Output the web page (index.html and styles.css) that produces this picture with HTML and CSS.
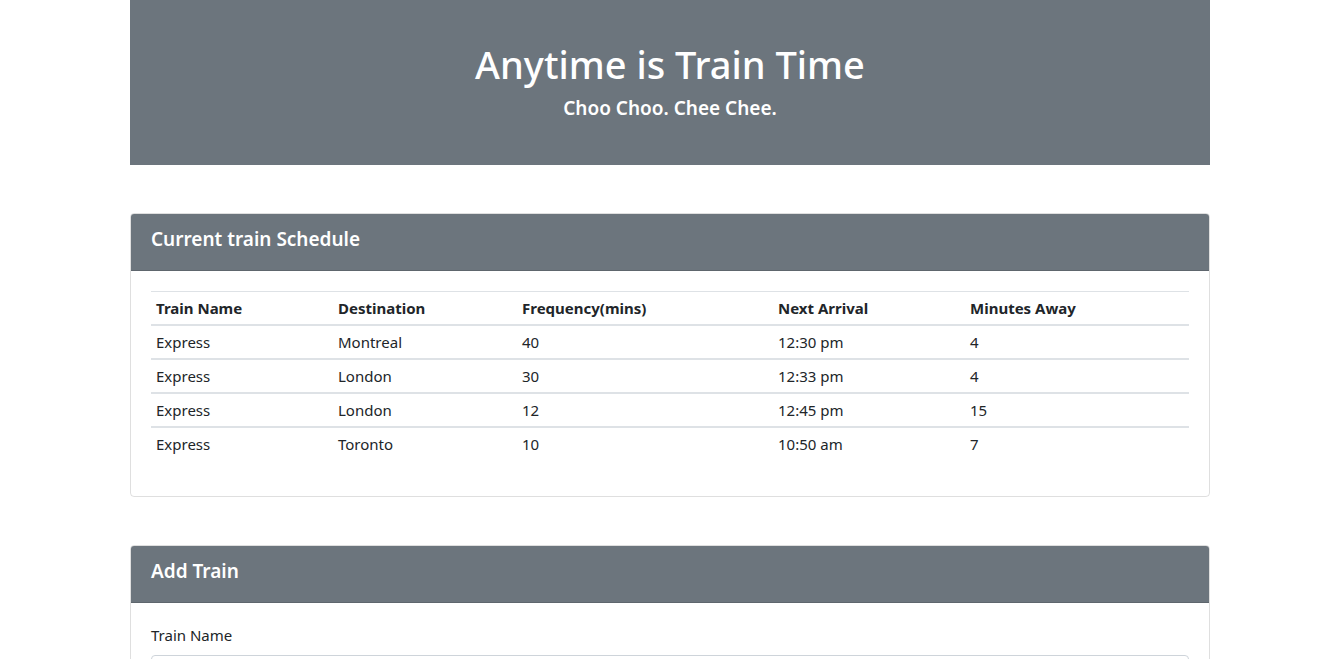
FILE: index.html
```html
<!DOCTYPE html>
<html lang="en">
<head>
<meta charset="utf-8">
<title>Train Time</title>
<link rel="stylesheet" href="styles.css">
</head>
<body>
<div class="container">
  <header class="jumbotron">
    <h1 class="title">Anytime is Train Time</h1>
    <h5 class="subtitle">Choo Choo. Chee Chee.</h5>
  </header>

  <section class="card">
    <div class="card-header"><h5 class="card-title">Current train Schedule</h5></div>
    <div class="card-body">
      <table class="table">
        <thead>
          <tr>
            <th class="c1">Train Name</th>
            <th class="c2">Destination</th>
            <th class="c3">Frequency(mins)</th>
            <th class="c4">Next Arrival</th>
            <th class="c5">Minutes Away</th>
          </tr>
        </thead>
        <tbody>
          <tr><td>Express</td><td>Montreal</td><td>40</td><td>12:30 pm</td><td>4</td></tr>
          <tr><td>Express</td><td>London</td><td>30</td><td>12:33 pm</td><td>4</td></tr>
          <tr><td>Express</td><td>London</td><td>12</td><td>12:45 pm</td><td>15</td></tr>
          <tr><td>Express</td><td>Toronto</td><td>10</td><td>10:50 am</td><td>7</td></tr>
        </tbody>
      </table>
    </div>
  </section>

  <section class="card">
    <div class="card-header"><h5 class="card-title">Add Train</h5></div>
    <div class="card-body">
      <form class="form">
        <div class="form-group">
          <label class="label" for="train-name">Train Name</label>
          <input class="input" id="train-name" type="text">
        </div>
      </form>
    </div>
  </section>
</div>
</body>
</html>
```

FILE: styles.css
```css
* { box-sizing: border-box; }

html, body {
  margin: 0;
  padding: 0;
  background: #fff;
}

body {
  font-family: "Noto Sans", "Open Sans", "Liberation Sans", sans-serif;
  font-size: 15px;
  line-height: 24px;
  color: #212529;
  padding-right: 3px;
}

.container {
  width: 1080px;
  margin: 0 auto;
  padding-bottom: 40px;
}

.jumbotron {
  background: #6c757d;
  color: #fff;
  text-align: center;
  padding: 40px 20px 37px;
  margin-bottom: 48px;
}

.title {
  margin: 0 0 8px;
  font-size: 38px;
  line-height: 48px;
  font-weight: 500;
}

.subtitle {
  margin: 0 0 8px;
  font-size: 19px;
  line-height: 24px;
  font-weight: 600;
}

.card {
  border: 1px solid rgba(0, 0, 0, 0.125);
  border-radius: 4px;
  margin-bottom: 48px;
  overflow: hidden;
}

.card-header {
  background: #6c757d;
  color: #fff;
  padding: 13px 20px 12px;
  border-bottom: 1px solid rgba(0, 0, 0, 0.125);
}

.card-title {
  margin: 0 0 7px;
  font-size: 19px;
  line-height: 24px;
  font-weight: 600;
}

.card-body {
  padding: 20px;
}

.table {
  width: 100%;
  border-collapse: collapse;
  margin-bottom: 16px;
}

.table th,
.table td {
  text-align: left;
  vertical-align: top;
  padding: 4px 5px;
  border-top: 2px solid #dee2e6;
}

.table thead th {
  font-weight: 700;
  border-top: 1px solid #dee2e6;
  border-bottom: 2px solid #dee2e6;
}

.c1 { width: 182px; }
.c2 { width: 184px; }
.c3 { width: 256px; }
.c4 { width: 192px; }

.form-group { margin-bottom: 16px; }

.label {
  display: block;
  margin-bottom: 8px;
}

.input {
  display: block;
  width: 100%;
  height: 38px;
  padding: 6px 12px;
  font: inherit;
  color: #495057;
  border: 1px solid #ced4da;
  border-radius: 4px;
  background: #fff;
}
```
